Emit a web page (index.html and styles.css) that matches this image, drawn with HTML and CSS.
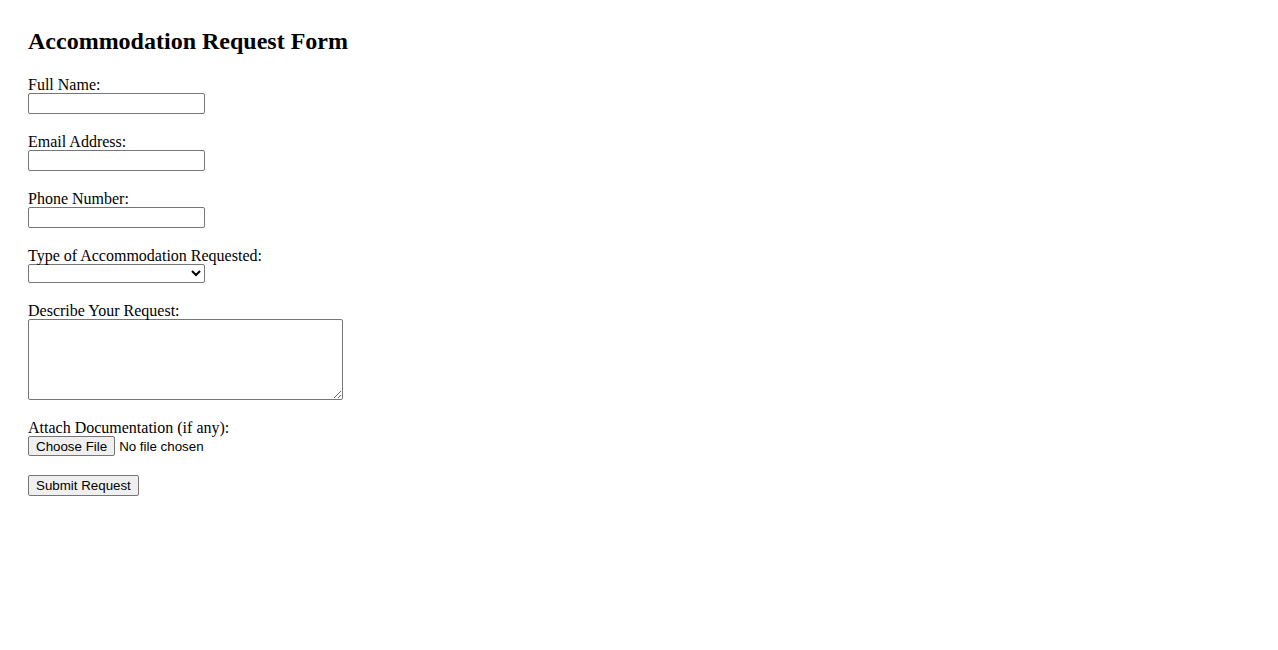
FILE: index.html
```html
<!DOCTYPE html>
<html lang="en">
<head>
    <meta charset="UTF-8">
    <meta name="viewport" content="width=device-width, initial-scale=1.0">
    <title>Accommodation Request Form</title>
    <link rel="stylesheet" href="styles.css">
</head>
<body>
    <h2>Accommodation Request Form</h2>

    <form class="request-form" onsubmit="return false;">
        <div class="field">
            <label for="name">Full Name:</label>
            <input type="text" id="name" name="name">
        </div>
        <div class="field">
            <label for="email">Email Address:</label>
            <input type="email" id="email" name="email">
        </div>
        <div class="field">
            <label for="phone">Phone Number:</label>
            <input type="tel" id="phone" name="phone">
        </div>
        <div class="field">
            <label for="type">Type of Accommodation Requested:</label>
            <select id="type" name="type"></select>
        </div>
        <div class="field">
            <label for="details">Describe Your Request:</label>
            <textarea id="details" name="details"></textarea>
        </div>
        <div class="field">
            <label for="docs">Attach Documentation (if any):</label>
            <input type="file" id="docs" name="docs" class="file-input">
        </div>
        <button type="submit" class="submit-btn">Submit Request</button>
    </form>
</body>
</html>
```

FILE: styles.css
```css
body {
    margin: 0;
    padding: 28px 28px;
    font-family: "Liberation Serif", "Times New Roman", serif;
    font-size: 16px;
    color: #000;
    background: #fff;
}
h2 {
    margin: 0 0 19px;
    font-size: 24px;
    font-weight: bold;
    line-height: 27px;
}
.field {
    margin-bottom: 17px;
}
.field label {
    display: block;
    height: 19px;
    line-height: 22px;
}
input[type="text"],
input[type="email"],
input[type="tel"] {
    display: block;
    box-sizing: border-box;
    width: 177px;
    height: 21px;
    margin: 0;
    padding: 1px 2px;
    border: 1px solid #767676;
    border-radius: 2px;
    font-family: "Liberation Sans", Arial, sans-serif;
    font-size: 13.33px;
}
select {
    display: block;
    box-sizing: border-box;
    width: 177px;
    height: 19px;
    margin: 0;
    border: 1px solid #767676;
    border-radius: 2px;
    background: #fff;
    font-family: "Liberation Sans", Arial, sans-serif;
    font-size: 13.33px;
}
textarea {
    display: block;
    box-sizing: border-box;
    width: 315px;
    height: 81px;
    margin: 0;
    padding: 2px;
    border: 1px solid #767676;
    border-radius: 2px;
    font-family: "Liberation Mono", monospace;
    font-size: 13.33px;
}
.file-input {
    display: block;
    height: 20px;
    margin: 0;
    font-family: "Liberation Sans", Arial, sans-serif;
    font-size: 13.33px;
    color: #000;
}
.file-input::file-selector-button {
    box-sizing: border-box;
    height: 20px;
    margin: 0 4px 0 0;
    padding: 1px 7px;
    border: 1px solid #767676;
    border-radius: 2px;
    background-color: #efefef;
    font-family: "Liberation Sans", Arial, sans-serif;
    font-size: 13.33px;
    color: #000;
}
.submit-btn {
    display: block;
    box-sizing: border-box;
    height: 21px;
    margin: 19px 0 0;
    padding: 1px 7px;
    border: 1px solid #767676;
    border-radius: 2px;
    background-color: #efefef;
    font-family: "Liberation Sans", Arial, sans-serif;
    font-size: 13.33px;
    color: #000;
}
```
